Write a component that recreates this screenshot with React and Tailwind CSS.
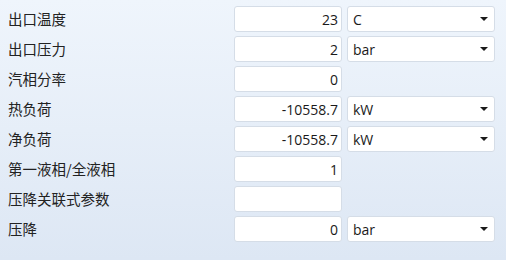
const rows = [
  { label: "出口温度", value: "23", unit: "C" },
  { label: "出口压力", value: "2", unit: "bar" },
  { label: "汽相分率", value: "0" },
  { label: "热负荷", value: "-10558.7", unit: "kW" },
  { label: "净负荷", value: "-10558.7", unit: "kW" },
  { label: "第一液相/全液相", value: "1" },
  { label: "压降关联式参数", value: "" },
  { label: "压降", value: "0", unit: "bar" },
];

function Caret() {
  return (
    <svg width="8" height="4" viewBox="0 0 8 4" className="shrink-0">
      <path d="M0 0 H8 L4 4 Z" fill="#1a1a1a" />
    </svg>
  );
}

export default function App() {
  return (
    <div
      className="w-[506px] h-[260px] bg-gradient-to-b from-[#eff5fc] to-[#dde7f4] pt-[6px] pl-[8px] flex flex-col gap-[4px] text-[#1a1a1a]"
      style={{ fontFamily: '"Open Sans", "Noto Sans CJK SC", sans-serif' }}
    >
      {rows.map((row, i) => (
        <div key={i} className="flex items-center h-[26px]">
          <div className="w-[226px] text-[14.5px] leading-none text-[#222]" style={{ fontFamily: '"Noto Sans CJK SC", sans-serif' }}>
            {row.label}
          </div>
          <div className="w-[108px] h-[26px] bg-white border border-[#d5dde7] rounded-[3px] flex items-center justify-end pr-[3px] text-[14px]">
            {row.value}
          </div>
          {row.unit && (
            <div className="ml-[5px] w-[148px] h-[26px] bg-white border border-[#d5dde7] rounded-[3px] flex items-center justify-between pl-[5px] pr-[6px] text-[14px]">
              <span>{row.unit}</span>
              <Caret />
            </div>
          )}
        </div>
      ))}
    </div>
  );
}
